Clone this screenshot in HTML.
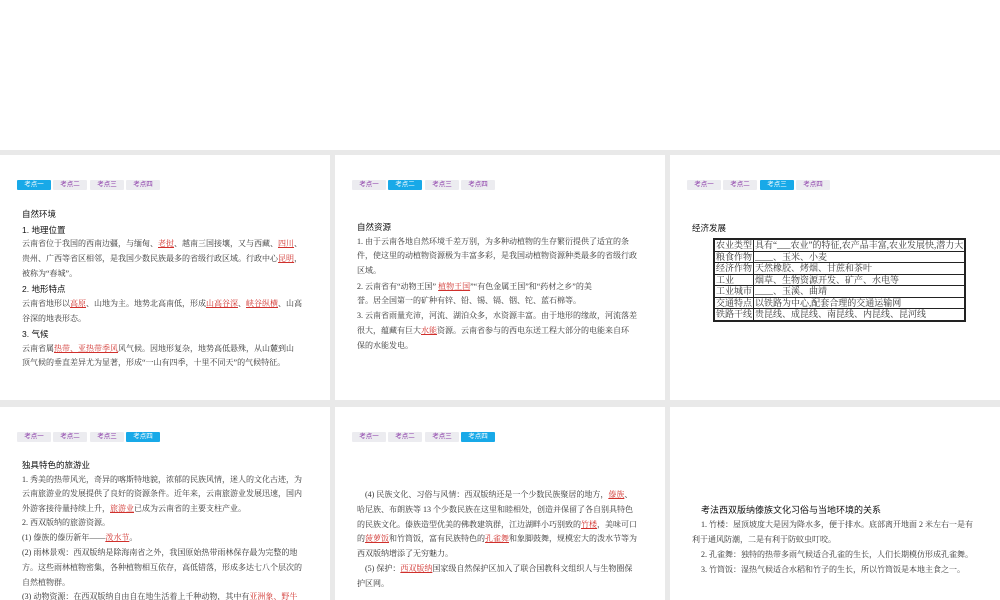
<!DOCTYPE html>
<html><head><meta charset="utf-8"><style>
*{margin:0;padding:0;box-sizing:border-box}
body{width:1000px;height:600px;background:#e9e9e9;position:relative;overflow:hidden;font-family:"Liberation Serif","Noto Serif CJK SC",serif;color:#333}
.top{position:absolute;left:0;top:0;width:1000px;height:150px;background:#fff}
.p{position:absolute;background:#fff;overflow:hidden}
.tab{position:absolute;top:25px;width:34px;height:10px;background:#ececf0;color:#8a3aa8;font:6.5px "Liberation Sans","Noto Sans CJK SC",sans-serif;text-align:center;line-height:10px;border-radius:1px}
.tab.a{background:#18a9e8;color:#fff}
.l{position:absolute;font-size:8px;line-height:12px;white-space:nowrap}
.h{font-family:"Liberation Sans","Noto Sans CJK SC",sans-serif;color:#111;font-size:8.5px}
.u{color:#d0302c;text-decoration:underline}
table{position:absolute;border-collapse:collapse;border:2px solid #222;font-size:9px;line-height:10.5px}
td{border:1px solid #222;padding:0 1px;white-space:nowrap;color:#333}
td:first-child{width:36px}
</style></head><body>
<div class="top"></div>

<div class="p" style="left:0;top:155px;width:330px;height:245px">
<div class="tab a" style="left:17px">考点一</div><div class="tab" style="left:53px">考点二</div><div class="tab" style="left:90px">考点三</div><div class="tab" style="left:126px">考点四</div>
<div class="l h" style="left:22px;top:53px">自然环境</div>
<div class="l h" style="left:22px;top:69px">1. 地理位置</div>
<div class="l" style="left:22px;top:83px">云南省位于我国的西南边疆，与缅甸、<span class="u">老挝</span>、越南三国接壤，又与西藏、<span class="u">四川</span>、</div>
<div class="l" style="left:22px;top:98px">贵州、广西等省区相邻，是我国少数民族最多的省级行政区域。行政中心<span class="u">昆明</span>，</div>
<div class="l" style="left:22px;top:113px">被称为“春城”。</div>
<div class="l h" style="left:22px;top:128px">2. 地形特点</div>
<div class="l" style="left:22px;top:143px">云南省地形以<span class="u">高原</span>、山地为主。地势北高南低，形成<span class="u">山高谷深</span>、<span class="u">峡谷纵横</span>、山高</div>
<div class="l" style="left:22px;top:158px">谷深的地表形态。</div>
<div class="l h" style="left:22px;top:173px">3. 气候</div>
<div class="l" style="left:22px;top:188px">云南省属<span class="u">热带、亚热带季风</span>风气候。因地形复杂，地势高低悬殊，从山麓到山</div>
<div class="l" style="left:22px;top:202px">顶气候的垂直差异尤为显著，形成“一山有四季，十里不同天”的气候特征。</div>
</div>

<div class="p" style="left:335px;top:155px;width:330px;height:245px">
<div class="tab" style="left:17px">考点一</div><div class="tab a" style="left:53px">考点二</div><div class="tab" style="left:90px">考点三</div><div class="tab" style="left:126px">考点四</div>
<div class="l h" style="left:22px;top:66px">自然资源</div>
<div class="l" style="left:22px;top:81px">1. 由于云南各地自然环境千差万别，为多种动植物的生存繁衍提供了适宜的条</div>
<div class="l" style="left:22px;top:95px">件，使这里的动植物资源极为丰富多彩，是我国动植物资源种类最多的省级行政</div>
<div class="l" style="left:22px;top:110px">区域。</div>
<div class="l" style="left:22px;top:126px">2. 云南省有“动物王国” <span class="u">植物王国</span>”“有色金属王国”和“药材之乡”的美</div>
<div class="l" style="left:22px;top:140px">誉。居全国第一的矿种有锌、铅、锡、镉、铟、铊、蓝石棉等。</div>
<div class="l" style="left:22px;top:155px">3. 云南省雨量充沛，河流、湖泊众多，水资源丰富。由于地形的缘故，河流落差</div>
<div class="l" style="left:22px;top:170px">很大，蕴藏有巨大<span class="u">水能</span>资源。云南省参与的西电东送工程大部分的电能来自环</div>
<div class="l" style="left:22px;top:185px">保的水能发电。</div>
</div>

<div class="p" style="left:670px;top:155px;width:330px;height:245px">
<div class="tab" style="left:17px">考点一</div><div class="tab" style="left:53px">考点二</div><div class="tab a" style="left:90px">考点三</div><div class="tab" style="left:126px">考点四</div>
<div class="l h" style="left:22px;top:67px">经济发展</div>
<table style="left:43px;top:83px;width:244px">
<tr><td>农业类型</td><td>具有“___农业”的特征,农产品丰富,农业发展快,潜力大</td></tr>
<tr><td>粮食作物</td><td>____、玉米、小麦</td></tr>
<tr><td>经济作物</td><td>天然橡胶、烤烟、甘蔗和茶叶</td></tr>
<tr><td>工业</td><td>烟草、生物资源开发、矿产、水电等</td></tr>
<tr><td>工业城市</td><td>____、玉溪、曲靖</td></tr>
<tr><td>交通特点</td><td>以铁路为中心,配套合理的交通运输网</td></tr>
<tr><td>铁路干线</td><td>贵昆线、成昆线、南昆线、内昆线、昆河线</td></tr>
</table>
</div>

<div class="p" style="left:0;top:407px;width:330px;height:193px">
<div class="tab" style="left:17px">考点一</div><div class="tab" style="left:53px">考点二</div><div class="tab" style="left:90px">考点三</div><div class="tab a" style="left:126px">考点四</div>
<div class="l h" style="left:22px;top:52px">独具特色的旅游业</div>
<div class="l" style="left:22px;top:67px">1. 秀美的热带风光，奇异的喀斯特地貌，浓郁的民族风情，迷人的文化古迹，为</div>
<div class="l" style="left:22px;top:81px">云南旅游业的发展提供了良好的资源条件。近年来，云南旅游业发展迅速，国内</div>
<div class="l" style="left:22px;top:96px">外游客接待量持续上升，<span class="u">旅游业</span>已成为云南省的主要支柱产业。</div>
<div class="l" style="left:22px;top:110px">2. 西双版纳的旅游资源。</div>
<div class="l" style="left:22px;top:125px">(1) 傣族的傣历新年——<span class="u">泼水节</span>。</div>
<div class="l" style="left:22px;top:140px">(2) 雨林景观：西双版纳是除海南省之外，我国原始热带雨林保存最为完整的地</div>
<div class="l" style="left:22px;top:155px">方。这些雨林植物密集，各种植物相互依存，高低错落，形成多达七八个层次的</div>
<div class="l" style="left:22px;top:170px">自然植物群。</div>
<div class="l" style="left:22px;top:184px">(3) 动物资源：在西双版纳自由自在地生活着上千种动物，其中有<span class="u">亚洲象、野牛</span></div>
</div>

<div class="p" style="left:335px;top:407px;width:330px;height:193px">
<div class="tab" style="left:17px">考点一</div><div class="tab" style="left:53px">考点二</div><div class="tab" style="left:90px">考点三</div><div class="tab a" style="left:126px">考点四</div>
<div class="l" style="left:30px;top:82px">(4) 民族文化、习俗与风情：西双版纳还是一个少数民族聚居的地方，<span class="u">傣族</span>、</div>
<div class="l" style="left:22px;top:97px">哈尼族、布朗族等 13 个少数民族在这里和睦相处，创造并保留了各自别具特色</div>
<div class="l" style="left:22px;top:112px">的民族文化。傣族造型优美的佛教建筑群，江边湖畔小巧别致的<span class="u">竹楼</span>，美味可口</div>
<div class="l" style="left:22px;top:126px">的<span class="u">菠萝饭</span>和竹筒饭，富有民族特色的<span class="u">孔雀舞</span>和象脚鼓舞，规模宏大的泼水节等为</div>
<div class="l" style="left:22px;top:141px">西双版纳增添了无穷魅力。</div>
<div class="l" style="left:30px;top:156px">(5) 保护：<span class="u">西双版纳</span>国家级自然保护区加入了联合国教科文组织人与生物圈保</div>
<div class="l" style="left:22px;top:171px">护区网。</div>
</div>

<div class="p" style="left:670px;top:407px;width:330px;height:193px">
<div class="l h" style="left:31px;top:97px;font-size:9px">考法西双版纳傣族文化习俗与当地环境的关系</div>
<div class="l" style="left:31px;top:112px">1. 竹楼：屋顶坡度大是因为降水多，便于排水。底部离开地面 2 米左右一是有</div>
<div class="l" style="left:22px;top:127px">利于通风防潮，二是有利于防蚊虫叮咬。</div>
<div class="l" style="left:31px;top:142px">2. 孔雀舞：独特的热带多雨气候适合孔雀的生长，人们长期模仿形成孔雀舞。</div>
<div class="l" style="left:31px;top:157px">3. 竹筒饭：湿热气候适合水稻和竹子的生长，所以竹筒饭是本地主食之一。</div>
</div>
</body></html>
